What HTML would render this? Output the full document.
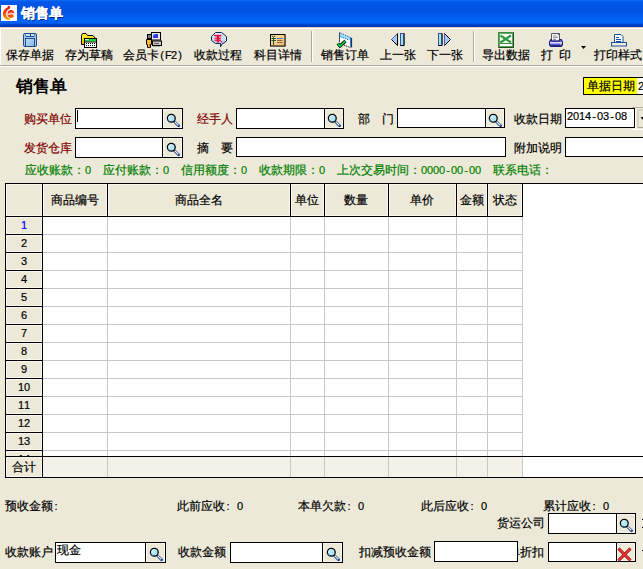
<!DOCTYPE html>
<html><head><meta charset="utf-8">
<style>
*{margin:0;padding:0;box-sizing:border-box}
html,body{width:643px;height:569px;overflow:hidden;background:#ECE9D8;font-family:"Liberation Sans",sans-serif;font-size:12px;color:#000;position:relative}
.a{position:absolute;white-space:nowrap;line-height:12px;-webkit-text-stroke:0.2px currentColor}
.c{display:inline-block;width:6px;text-align:center;font-style:normal;font-size:11px}
.red{color:#800000}
.grn{color:#008000}
</style></head><body>
<div style="position:absolute;left:0;top:0;width:643px;height:27px;background:linear-gradient(#0B6EFC 0px,#0862F0 1px,#0058E8 2px,#0054E3 5px,#0054E3 12px,#0058EA 14px,#005EF2 17px,#0064FA 21px,#0062F8 23px,#0050DC 24px,#003CC0 25px,#003AB8 27px)"></div>
<svg style="position:absolute;left:0;top:0" width="20" height="24" viewBox="0 0 20 24">
<defs><linearGradient id="gflame" x1="0" y1="0" x2="0" y2="1"><stop offset="0" stop-color="#E01010"/><stop offset="0.5" stop-color="#F04A10"/><stop offset="1" stop-color="#F8A800"/></linearGradient>
<linearGradient id="ge" x1="0" y1="0" x2="0" y2="1"><stop offset="0" stop-color="#E81810"/><stop offset="1" stop-color="#F06010"/></linearGradient></defs>
<rect x="1" y="5" width="16" height="16" fill="#fff"/>
<path d="M7.6 5.4 C10 5.6 11 7.4 9.6 8.8 C6.6 10.4 5.6 13 6.4 15.4 C7.2 17.6 9.6 18.6 12.2 19 C9.4 20.6 5 20 3.4 16.4 C2 13 3.6 9.4 7.2 7.6 C8 7 8.2 6.2 7.6 5.4 Z" fill="url(#gflame)"/>
<ellipse cx="10.9" cy="13.9" rx="3.4" ry="3.9" fill="url(#ge)"/>
<path d="M8.6 13.4 C9 11.6 12.4 11.2 13 13 Z" fill="#F8C0A0" opacity="0.5"/>
<path d="M7.6 14.2 L14.4 13.6" stroke="#fff" stroke-width="1.1"/>
<path d="M12 14.6 L14.8 14.2 L14.8 16.4 Z" fill="#fff"/>
</svg>
<div class="a" style="left:21px;top:6px;color:#fff;font-weight:bold;font-size:14px;line-height:14px;-webkit-text-stroke:0.25px #fff;text-shadow:1px 1px 0 #0A2878">销售单</div>
<div style="position:absolute;left:0;top:27px;width:643px;height:1px;background:#D6D0BC"></div>
<div style="position:absolute;left:0;top:28px;width:643px;height:1px;background:#fff"></div>
<div style="position:absolute;left:0;top:28px;width:1px;height:37px;background:#fff"></div>
<div style="position:absolute;left:0;top:65px;width:643px;height:1px;background:#ACA899"></div>
<div style="position:absolute;left:0;top:66px;width:643px;height:1px;background:#fff"></div>
<div style="position:absolute;left:311px;top:31px;width:1px;height:31px;background:#ACA899"></div>
<div style="position:absolute;left:312px;top:31px;width:1px;height:31px;background:#fff"></div>
<div style="position:absolute;left:473px;top:31px;width:1px;height:31px;background:#ACA899"></div>
<div style="position:absolute;left:474px;top:31px;width:1px;height:31px;background:#fff"></div>
<svg style="position:absolute;left:0;top:0" width="643" height="70" viewBox="0 0 643 70">
<defs>
<linearGradient id="gfl" x1="0" y1="0" x2="1" y2="1"><stop offset="0" stop-color="#C9E2FA"/><stop offset="1" stop-color="#7FAEE0"/></linearGradient>
<linearGradient id="gfold" x1="0" y1="0" x2="0" y2="1"><stop offset="0" stop-color="#FFF040"/><stop offset="0.6" stop-color="#FFD800"/><stop offset="1" stop-color="#F09000"/></linearGradient>
<linearGradient id="gcard" x1="0" y1="0" x2="1" y2="1"><stop offset="0" stop-color="#FBE3A8"/><stop offset="1" stop-color="#F0B868"/></linearGradient>
<linearGradient id="gbub" x1="0" y1="0" x2="0" y2="1"><stop offset="0" stop-color="#E4F2FF"/><stop offset="1" stop-color="#A8C8EC"/></linearGradient>
<linearGradient id="gprn" x1="0" y1="0" x2="0" y2="1"><stop offset="0" stop-color="#8080F0"/><stop offset="0.5" stop-color="#C8C8FF"/><stop offset="1" stop-color="#2828A0"/></linearGradient>
</defs>
<!-- 1 floppy -->
<g transform="translate(23,33)">
 <rect x="0.5" y="0.5" width="13" height="13" rx="1.5" fill="#A6CBF0" stroke="#1E4C8A"/>
 <rect x="2.5" y="0.5" width="9" height="3.5" fill="#1E4C8A"/>
 <rect x="3" y="1" width="4" height="2" fill="#C8E0F8"/>
 <rect x="8" y="1" width="3" height="2" fill="#C8E0F8"/>
 <rect x="2.5" y="5.5" width="9" height="8" fill="url(#gfl)" stroke="#1E4C8A"/>
</g>
<!-- 2 folder calc -->
<g transform="translate(81,33)">
 <path d="M0.5 2.5 L1.5 0.5 L5 0.5 L6.5 2.5 L12 2.5 L14.5 5.5 L14.5 11.5 L0.5 11.5 Z" fill="url(#gfold)" stroke="#000"/>
 <rect x="3.5" y="5.5" width="12" height="9" fill="#fff" stroke="#000"/>
 <rect x="4" y="6" width="11" height="2.5" fill="#20D040"/>
 <rect x="4" y="6" width="4" height="1" fill="#C0FFC0"/>
 <rect x="4" y="8.5" width="11" height="1" fill="#000"/>
 <g fill="#000">
 <rect x="5" y="10" width="1" height="1"/><rect x="7" y="10" width="1" height="1"/><rect x="9" y="10" width="1" height="1"/><rect x="11" y="10" width="1" height="1"/><rect x="13" y="10" width="1" height="1"/>
 <rect x="5" y="12" width="1" height="1"/><rect x="7" y="12" width="1" height="1"/><rect x="9" y="12" width="1" height="1"/><rect x="11" y="12" width="1" height="1"/><rect x="13" y="12" width="1" height="1"/>
 </g>
</g>
<!-- 3 member card -->
<g transform="translate(146,32)">
 <rect x="5.5" y="0.5" width="9" height="7.5" fill="#E8E8E8" stroke="#000"/>
 <rect x="7" y="2" width="5" height="4" fill="#3434E8"/>
 <rect x="7" y="2" width="1.5" height="1.5" fill="#40E0F0"/>
 <rect x="6.5" y="9" width="9" height="4.5" fill="#C8C8C8" stroke="#000"/>
 <rect x="8" y="11" width="5" height="1" fill="#606060"/>
 <rect x="7" y="14" width="7" height="1" fill="#B0B0B0"/>
 <rect x="1.5" y="2.5" width="4" height="4" fill="#808080" stroke="#000"/>
 <path d="M0.5 7.5 L5.5 7.5 L5.5 12.5 L4.5 12.5 L4.5 15.5 L1.5 15.5 L1.5 12.5 L0.5 12.5 Z" fill="#F8B838" stroke="#000"/>
 <rect x="3" y="12" width="0.8" height="3.5" fill="#C07800"/>
</g>
<!-- 4 bubble yen -->
<g transform="translate(211,32)">
 <path d="M4.5 0.5 L10.5 0.5 L15.5 4.5 L15.5 9 L12 11.5 L11.5 11.5 L9.5 14.8 L9.5 11.5 L4.5 11.5 L0.5 8.5 L0.5 4.5 Z" fill="url(#gbub)" stroke="#15254F"/>
 <g fill="#E8103C">
 <rect x="3" y="2.8" width="7.5" height="1.5"/>
 <rect x="5.8" y="4" width="2.4" height="6.5"/>
 <rect x="3.5" y="5.6" width="6.5" height="1.2"/>
 <rect x="3.5" y="7.6" width="6.5" height="1.2"/>
 <rect x="9.5" y="9.2" width="1.8" height="1.2"/>
 </g>
</g>
<!-- 5 card -->
<g transform="translate(270,34)">
 <rect x="1" y="1" width="15" height="12" fill="#9A9A9A" opacity="0.5"/>
 <rect x="0.5" y="0.5" width="14.5" height="11.5" fill="url(#gcard)" stroke="#000"/>
 <g stroke="#1F5A2A" stroke-width="1" fill="none">
  <path d="M2 1.5 L3.5 3.5 L5 1.5"/>
  <path d="M1.5 4.5 L6 4.5 M1.5 6.5 L6 6.5 M3.5 3.5 L3.5 11"/>
 </g>
 <rect x="7" y="4" width="5.5" height="1" fill="#4070D0"/>
 <rect x="7" y="6" width="5.5" height="1" fill="#806850"/>
 <rect x="7" y="8" width="5.5" height="1" fill="#806850"/>
</g>
<!-- 6 order -->
<g transform="translate(337,32)">
 <path d="M2.5 0.5 L14.5 6 L14.5 15.5 L2.5 10 Z" fill="#fff"/>
 <path d="M2.5 0.5 L14.5 6 L14.5 8.5 L2.5 4.5 Z" fill="#90E0F8"/>
 <path d="M2.5 0.5 L14.5 6" stroke="#2050A0" stroke-dasharray="1 1"/>
 <path d="M2.5 4.5 L12 8" stroke="#2050A0" stroke-dasharray="1 1"/>
 <path d="M2.5 0.5 L2.5 10" stroke="#404850"/>
 <rect x="13.3" y="6" width="1.8" height="9.5" fill="#0A3A80"/>
 <path d="M7 13 L13 15.5" stroke="#000" stroke-dasharray="1 1"/>
 <path d="M0.8 11.5 L3 14 L8.5 9" stroke="#000" stroke-width="3.2" fill="none"/>
 <path d="M0.8 11.5 L3 14 L8.5 9" stroke="#00E040" stroke-width="1.6" fill="none"/>
</g>
<!-- 7 prev -->
<g transform="translate(391,33)">
 <path d="M0.5 6.5 L6.5 0.5 L6.5 12.5 Z" fill="#A8C8F8"/>
 <path d="M0.5 6.5 L6.5 0.5" stroke="#5858A8"/>
 <path d="M0.5 6.5 L6.5 12.5 M6.5 0.5 L6.5 12.5" stroke="#000"/>
 <rect x="9.5" y="0.5" width="3.5" height="12" fill="#90E8F8" stroke="#484898"/>
 <path d="M13 0.5 L13 12.5 L9.5 12.5" stroke="#000" fill="none"/>
</g>
<!-- 8 next -->
<g transform="translate(438,33)">
 <rect x="0.5" y="0.5" width="3.5" height="12" fill="#90E8F8" stroke="#484898"/>
 <path d="M4 0.5 L4 12.5 L0.5 12.5" stroke="#000" fill="none"/>
 <path d="M6.5 0.5 L12.5 6.5 L6.5 12.5 Z" fill="#A8C8F8"/>
 <path d="M6.5 0.5 L6.5 12.5" stroke="#5858A8"/>
 <path d="M6.5 0.5 L12.5 6.5 L6.5 12.5" stroke="#000" fill="none"/>
</g>
<!-- 9 excel -->
<g transform="translate(498,32)">
 <rect x="0.5" y="0.5" width="15" height="15" fill="#fff" stroke="#3C8C3C"/>
 <rect x="1.5" y="1.5" width="13" height="13" fill="none" stroke="#60A860"/>
 <path d="M15.5 0.5 L15.5 15.5 L0.5 15.5" stroke="#1E4A1E" fill="none"/>
 <path d="M2.5 3.5 L13 10.5 M13 3.5 L2.5 10.5" stroke="#2E9A3E" stroke-width="2.2"/>
 <rect x="2" y="11" width="12" height="1" fill="#3C8C3C"/>
</g>
<!-- 10 printer -->
<g transform="translate(549,33)">
 <path d="M2.5 0.5 L9.5 0.5 L10.5 1.5 L10.5 8 L2.5 8 Z" fill="#F2F2F2" stroke="#5A5A6A"/>
 <rect x="9.2" y="0.2" width="1.6" height="1.6" fill="#303040"/>
 <rect x="4" y="2.5" width="4" height="0.9" fill="#8A8A9A"/><rect x="4" y="4.2" width="5" height="0.9" fill="#8A8A9A"/><rect x="4" y="6" width="3" height="0.9" fill="#8A8A9A"/>
 <path d="M1.5 6.5 L2.5 6.5 L2.5 8 L10.5 8 L10.5 6.5 L12.5 6.5 L13.5 9 L13.5 12 L12.5 13.5 L1.5 13.5 L0.5 12 L0.5 9 Z" fill="#5A5ADC" stroke="#1C1C70"/>
 <rect x="1" y="9" width="12" height="1.6" fill="#D8D8FF"/>
 <rect x="1" y="12" width="12" height="1.5" fill="#26268A"/>
 <rect x="11" y="10.5" width="1.2" height="1.2" fill="#C0FF40"/>
</g>
<path d="M581 46 L586 46 L583.5 49 Z" fill="#000"/>
<!-- 11 print style -->
<g transform="translate(611,34)">
 <path d="M3.5 0.5 L10 0.5 L12 2.5 L12 9 L3.5 9 Z" fill="#fff" stroke="#1A4FA0"/>
 <rect x="5" y="3" width="3" height="1" fill="#1A4FA0"/><rect x="5" y="5" width="5" height="1" fill="#1A4FA0"/><rect x="5" y="7" width="5" height="1" fill="#1A4FA0"/>
 <rect x="0.5" y="8.5" width="15" height="3.5" fill="#F0F0E0" stroke="#1A4FA0"/>
</g>
</svg>

<div class="a " style="left:6px;top:49px;">保存单据</div>
<div class="a " style="left:65px;top:49px;">存为草稿</div>
<div class="a " style="left:123px;top:49px;">会员卡<i class="c">(</i><i class="c">F</i><i class="c">2</i><i class="c">)</i></div>
<div class="a " style="left:194px;top:49px;">收款过程</div>
<div class="a " style="left:254px;top:49px;">科目详情</div>
<div class="a " style="left:321px;top:49px;">销售订单</div>
<div class="a " style="left:380px;top:49px;">上一张</div>
<div class="a " style="left:427px;top:49px;">下一张</div>
<div class="a " style="left:482px;top:49px;">导出数据</div>
<div class="a " style="left:541px;top:49px;">打<span style="display:inline-block;width:6px"></span>印</div>
<div class="a " style="left:594px;top:49px;">打印样式</div>
<div class="a" style="left:16px;top:78px;font-size:16.5px;line-height:17px;font-weight:bold;-webkit-text-stroke:0px #000">销售单</div>
<div style="position:absolute;left:583px;top:77px;width:78px;height:18px;background:#FFFF00;border:1px solid #000;"></div>
<div style="position:absolute;left:637px;top:78px;width:10px;height:16px;background:#fff"></div>
<div class="a " style="left:587px;top:80px;">单据日期</div>
<div class="a " style="left:638px;top:80px;"><i class="c">2</i></div>
<div class="a red" style="left:24px;top:113px;">购买单位</div>
<div style="position:absolute;left:75px;top:108px;width:88px;height:21px;background:#fff;border:1px solid #000;"></div>
<div style="position:absolute;left:162px;top:108px;width:21px;height:21px;background:#ECE9D8;border:1px solid #000;box-shadow:inset 0 0 0 1px #F8F6EC"><div style="position:absolute;left:-1px;top:-1px;width:20px;height:20px"><svg width="20" height="20" viewBox="0 0 20 20" style="position:absolute;left:0;top:0">
<path d="M12.4 13.6 L16.6 17.8" stroke="#183A86" stroke-width="2.7" stroke-linecap="round"/>
<path d="M12.6 13.6 L16.3 17.3" stroke="#E4F2FF" stroke-width="1.3"/>
<circle cx="9.3" cy="10.3" r="3.9" fill="#B0E6F8" stroke="#000" stroke-width="1.3"/>
<path d="M7.2 11.5 A2.6 2.6 0 0 1 9.5 7.6" stroke="#E8FAFF" stroke-width="1" fill="none"/>
<path d="M6 11.5 A3.5 3.5 0 0 0 8 13.6" stroke="#3C78E0" stroke-width="1" fill="none"/>
</svg></div></div>
<div style="position:absolute;left:77px;top:110px;width:1px;height:12px;background:#000"></div>
<div class="a red" style="left:197px;top:113px;">经手人</div>
<div style="position:absolute;left:236px;top:108px;width:89px;height:21px;background:#fff;border:1px solid #000;"></div>
<div style="position:absolute;left:324px;top:108px;width:20px;height:21px;background:#ECE9D8;border:1px solid #000;box-shadow:inset 0 0 0 1px #F8F6EC"><div style="position:absolute;left:-2px;top:-1px;width:20px;height:20px"><svg width="20" height="20" viewBox="0 0 20 20" style="position:absolute;left:0;top:0">
<path d="M12.4 13.6 L16.6 17.8" stroke="#183A86" stroke-width="2.7" stroke-linecap="round"/>
<path d="M12.6 13.6 L16.3 17.3" stroke="#E4F2FF" stroke-width="1.3"/>
<circle cx="9.3" cy="10.3" r="3.9" fill="#B0E6F8" stroke="#000" stroke-width="1.3"/>
<path d="M7.2 11.5 A2.6 2.6 0 0 1 9.5 7.6" stroke="#E8FAFF" stroke-width="1" fill="none"/>
<path d="M6 11.5 A3.5 3.5 0 0 0 8 13.6" stroke="#3C78E0" stroke-width="1" fill="none"/>
</svg></div></div>
<div class="a " style="left:358px;top:113px;">部　门</div>
<div style="position:absolute;left:397px;top:108px;width:89px;height:20px;background:#fff;border:1px solid #000;"></div>
<div style="position:absolute;left:485px;top:108px;width:20px;height:20px;background:#ECE9D8;border:1px solid #000;box-shadow:inset 0 0 0 1px #F8F6EC"><div style="position:absolute;left:-2px;top:-1px;width:20px;height:20px"><svg width="20" height="20" viewBox="0 0 20 20" style="position:absolute;left:0;top:0">
<path d="M12.4 13.6 L16.6 17.8" stroke="#183A86" stroke-width="2.7" stroke-linecap="round"/>
<path d="M12.6 13.6 L16.3 17.3" stroke="#E4F2FF" stroke-width="1.3"/>
<circle cx="9.3" cy="10.3" r="3.9" fill="#B0E6F8" stroke="#000" stroke-width="1.3"/>
<path d="M7.2 11.5 A2.6 2.6 0 0 1 9.5 7.6" stroke="#E8FAFF" stroke-width="1" fill="none"/>
<path d="M6 11.5 A3.5 3.5 0 0 0 8 13.6" stroke="#3C78E0" stroke-width="1" fill="none"/>
</svg></div></div>
<div class="a " style="left:514px;top:113px;">收款日期</div>
<div style="position:absolute;left:565px;top:108px;width:70px;height:20px;background:#fff;border:1px solid #000;"></div>
<div class="a " style="left:567px;top:110px;"><i class="c">2</i><i class="c">0</i><i class="c">1</i><i class="c">4</i><i class="c">-</i><i class="c">0</i><i class="c">3</i><i class="c">-</i><i class="c">0</i><i class="c">8</i></div>
<div style="position:absolute;left:632px;top:107px;width:11px;height:1px;background:#B8B2A0"></div>
<div style="position:absolute;left:635px;top:108px;width:1px;height:22px;background:#fff"></div>
<div style="position:absolute;left:632px;top:129px;width:11px;height:1px;background:#fff"></div>
<div style="position:absolute;left:637px;top:109px;width:10px;height:19px;background:#ECE9D8;border-top:2px solid #D8D4C6;border-left:2px solid #D8D4C6;border-bottom:1px solid #A8A490"></div>
<svg style="position:absolute;left:637px;top:108px" width="6" height="20"><path d="M3.5 9 L8.5 9 L6 12 Z" fill="#000"/></svg>

<div class="a red" style="left:24px;top:142px;">发货仓库</div>
<div style="position:absolute;left:75px;top:137px;width:88px;height:21px;background:#fff;border:1px solid #000;"></div>
<div style="position:absolute;left:162px;top:137px;width:21px;height:21px;background:#ECE9D8;border:1px solid #000;box-shadow:inset 0 0 0 1px #F8F6EC"><div style="position:absolute;left:-1px;top:-1px;width:20px;height:20px"><svg width="20" height="20" viewBox="0 0 20 20" style="position:absolute;left:0;top:0">
<path d="M12.4 13.6 L16.6 17.8" stroke="#183A86" stroke-width="2.7" stroke-linecap="round"/>
<path d="M12.6 13.6 L16.3 17.3" stroke="#E4F2FF" stroke-width="1.3"/>
<circle cx="9.3" cy="10.3" r="3.9" fill="#B0E6F8" stroke="#000" stroke-width="1.3"/>
<path d="M7.2 11.5 A2.6 2.6 0 0 1 9.5 7.6" stroke="#E8FAFF" stroke-width="1" fill="none"/>
<path d="M6 11.5 A3.5 3.5 0 0 0 8 13.6" stroke="#3C78E0" stroke-width="1" fill="none"/>
</svg></div></div>
<div class="a " style="left:197px;top:142px;">摘　要</div>
<div style="position:absolute;left:236px;top:137px;width:270px;height:20px;background:#fff;border:1px solid #000;"></div>
<div class="a " style="left:514px;top:142px;">附加说明</div>
<div style="position:absolute;left:565px;top:137px;width:96px;height:20px;background:#fff;border:1px solid #000;"></div>
<div class="a grn" style="left:25px;top:164px;">应收账款：<i class="c">0</i>　应付账款：<i class="c">0</i>　信用额度：<i class="c">0</i>　收款期限：<i class="c">0</i>　上次交易时间：<i class="c">0</i><i class="c">0</i><i class="c">0</i><i class="c">0</i><i class="c">-</i><i class="c">0</i><i class="c">0</i><i class="c">-</i><i class="c">0</i><i class="c">0</i>　联系电话：</div>
<div style="position:absolute;left:5px;top:183px;width:660px;height:295px;background:#fff;border:1px solid #000"></div>
<div style="position:absolute;left:6px;top:184px;width:516px;height:32px;background:#ECE9D8"></div>
<div style="position:absolute;left:6px;top:217px;width:36px;height:239px;background:#ECE9D8"></div>
<div style="position:absolute;left:43px;top:457px;width:479px;height:20px;background:#F3F1E8"></div>
<div style="position:absolute;left:6px;top:457px;width:36px;height:20px;background:#ECE9D8"></div>
<div style="position:absolute;left:6px;top:184px;width:36px;height:32px;border:1px solid #F8F6EE"></div>
<div style="position:absolute;left:43px;top:184px;width:64px;height:32px;border:1px solid #F8F6EE"></div>
<div style="position:absolute;left:108px;top:184px;width:182px;height:32px;border:1px solid #F8F6EE"></div>
<div style="position:absolute;left:291px;top:184px;width:33px;height:32px;border:1px solid #F8F6EE"></div>
<div style="position:absolute;left:325px;top:184px;width:63px;height:32px;border:1px solid #F8F6EE"></div>
<div style="position:absolute;left:389px;top:184px;width:67px;height:32px;border:1px solid #F8F6EE"></div>
<div style="position:absolute;left:457px;top:184px;width:30px;height:32px;border:1px solid #F8F6EE"></div>
<div style="position:absolute;left:488px;top:184px;width:34px;height:32px;border:1px solid #F8F6EE"></div>
<div style="position:absolute;left:6px;top:217px;width:36px;height:17px;border:1px solid #F8F6EE"></div>
<div style="position:absolute;left:6px;top:235px;width:36px;height:17px;border:1px solid #F8F6EE"></div>
<div style="position:absolute;left:6px;top:253px;width:36px;height:17px;border:1px solid #F8F6EE"></div>
<div style="position:absolute;left:6px;top:271px;width:36px;height:17px;border:1px solid #F8F6EE"></div>
<div style="position:absolute;left:6px;top:289px;width:36px;height:17px;border:1px solid #F8F6EE"></div>
<div style="position:absolute;left:6px;top:307px;width:36px;height:17px;border:1px solid #F8F6EE"></div>
<div style="position:absolute;left:6px;top:325px;width:36px;height:17px;border:1px solid #F8F6EE"></div>
<div style="position:absolute;left:6px;top:343px;width:36px;height:17px;border:1px solid #F8F6EE"></div>
<div style="position:absolute;left:6px;top:361px;width:36px;height:17px;border:1px solid #F8F6EE"></div>
<div style="position:absolute;left:6px;top:379px;width:36px;height:17px;border:1px solid #F8F6EE"></div>
<div style="position:absolute;left:6px;top:397px;width:36px;height:17px;border:1px solid #F8F6EE"></div>
<div style="position:absolute;left:6px;top:415px;width:36px;height:17px;border:1px solid #F8F6EE"></div>
<div style="position:absolute;left:6px;top:433px;width:36px;height:17px;border:1px solid #F8F6EE"></div>
<div style="position:absolute;left:6px;top:451px;width:36px;height:5px;border:1px solid #F8F6EE;border-bottom:none"></div>
<div style="position:absolute;left:6px;top:457px;width:36px;height:20px;border:1px solid #F8F6EE"></div>
<div style="position:absolute;left:42px;top:183px;width:1px;height:34px;background:#000"></div>
<div style="position:absolute;left:107px;top:183px;width:1px;height:34px;background:#000"></div>
<div style="position:absolute;left:290px;top:183px;width:1px;height:34px;background:#000"></div>
<div style="position:absolute;left:324px;top:183px;width:1px;height:34px;background:#000"></div>
<div style="position:absolute;left:388px;top:183px;width:1px;height:34px;background:#000"></div>
<div style="position:absolute;left:456px;top:183px;width:1px;height:34px;background:#000"></div>
<div style="position:absolute;left:487px;top:183px;width:1px;height:34px;background:#000"></div>
<div style="position:absolute;left:522px;top:183px;width:1px;height:34px;background:#000"></div>
<div style="position:absolute;left:5px;top:216px;width:518px;height:1px;background:#000"></div>
<div style="position:absolute;left:107px;top:217px;width:1px;height:260px;background:#C8C8C8"></div>
<div style="position:absolute;left:290px;top:217px;width:1px;height:260px;background:#C8C8C8"></div>
<div style="position:absolute;left:324px;top:217px;width:1px;height:260px;background:#C8C8C8"></div>
<div style="position:absolute;left:388px;top:217px;width:1px;height:260px;background:#C8C8C8"></div>
<div style="position:absolute;left:456px;top:217px;width:1px;height:260px;background:#C8C8C8"></div>
<div style="position:absolute;left:487px;top:217px;width:1px;height:260px;background:#C8C8C8"></div>
<div style="position:absolute;left:522px;top:217px;width:1px;height:260px;background:#C8C8C8"></div>
<div style="position:absolute;left:43px;top:234px;width:480px;height:1px;background:#C8C8C8"></div>
<div style="position:absolute;left:5px;top:234px;width:38px;height:1px;background:#000"></div>
<div style="position:absolute;left:43px;top:252px;width:480px;height:1px;background:#C8C8C8"></div>
<div style="position:absolute;left:5px;top:252px;width:38px;height:1px;background:#000"></div>
<div style="position:absolute;left:43px;top:270px;width:480px;height:1px;background:#C8C8C8"></div>
<div style="position:absolute;left:5px;top:270px;width:38px;height:1px;background:#000"></div>
<div style="position:absolute;left:43px;top:288px;width:480px;height:1px;background:#C8C8C8"></div>
<div style="position:absolute;left:5px;top:288px;width:38px;height:1px;background:#000"></div>
<div style="position:absolute;left:43px;top:306px;width:480px;height:1px;background:#C8C8C8"></div>
<div style="position:absolute;left:5px;top:306px;width:38px;height:1px;background:#000"></div>
<div style="position:absolute;left:43px;top:324px;width:480px;height:1px;background:#C8C8C8"></div>
<div style="position:absolute;left:5px;top:324px;width:38px;height:1px;background:#000"></div>
<div style="position:absolute;left:43px;top:342px;width:480px;height:1px;background:#C8C8C8"></div>
<div style="position:absolute;left:5px;top:342px;width:38px;height:1px;background:#000"></div>
<div style="position:absolute;left:43px;top:360px;width:480px;height:1px;background:#C8C8C8"></div>
<div style="position:absolute;left:5px;top:360px;width:38px;height:1px;background:#000"></div>
<div style="position:absolute;left:43px;top:378px;width:480px;height:1px;background:#C8C8C8"></div>
<div style="position:absolute;left:5px;top:378px;width:38px;height:1px;background:#000"></div>
<div style="position:absolute;left:43px;top:396px;width:480px;height:1px;background:#C8C8C8"></div>
<div style="position:absolute;left:5px;top:396px;width:38px;height:1px;background:#000"></div>
<div style="position:absolute;left:43px;top:414px;width:480px;height:1px;background:#C8C8C8"></div>
<div style="position:absolute;left:5px;top:414px;width:38px;height:1px;background:#000"></div>
<div style="position:absolute;left:43px;top:432px;width:480px;height:1px;background:#C8C8C8"></div>
<div style="position:absolute;left:5px;top:432px;width:38px;height:1px;background:#000"></div>
<div style="position:absolute;left:43px;top:450px;width:480px;height:1px;background:#C8C8C8"></div>
<div style="position:absolute;left:5px;top:450px;width:38px;height:1px;background:#000"></div>
<div style="position:absolute;left:42px;top:216px;width:1px;height:262px;background:#000"></div>
<div style="position:absolute;left:5px;top:456px;width:660px;height:1px;background:#000"></div>
<div class="a" style="left:6px;top:219px;width:36px;text-align:center;color:#0000FF"><i class="c">1</i></div>
<div class="a" style="left:6px;top:237px;width:36px;text-align:center;color:#000"><i class="c">2</i></div>
<div class="a" style="left:6px;top:255px;width:36px;text-align:center;color:#000"><i class="c">3</i></div>
<div class="a" style="left:6px;top:273px;width:36px;text-align:center;color:#000"><i class="c">4</i></div>
<div class="a" style="left:6px;top:291px;width:36px;text-align:center;color:#000"><i class="c">5</i></div>
<div class="a" style="left:6px;top:309px;width:36px;text-align:center;color:#000"><i class="c">6</i></div>
<div class="a" style="left:6px;top:327px;width:36px;text-align:center;color:#000"><i class="c">7</i></div>
<div class="a" style="left:6px;top:345px;width:36px;text-align:center;color:#000"><i class="c">8</i></div>
<div class="a" style="left:6px;top:363px;width:36px;text-align:center;color:#000"><i class="c">9</i></div>
<div class="a" style="left:6px;top:381px;width:36px;text-align:center;color:#000"><i class="c">1</i><i class="c">0</i></div>
<div class="a" style="left:6px;top:399px;width:36px;text-align:center;color:#000"><i class="c">1</i><i class="c">1</i></div>
<div class="a" style="left:6px;top:417px;width:36px;text-align:center;color:#000"><i class="c">1</i><i class="c">2</i></div>
<div class="a" style="left:6px;top:435px;width:36px;text-align:center;color:#000"><i class="c">1</i><i class="c">3</i></div>
<div class="a" style="left:42px;top:194px;width:65px;text-align:center">商品编号</div>
<div class="a" style="left:107px;top:194px;width:183px;text-align:center">商品全名</div>
<div class="a" style="left:290px;top:194px;width:34px;text-align:center">单位</div>
<div class="a" style="left:324px;top:194px;width:64px;text-align:center">数量</div>
<div class="a" style="left:388px;top:194px;width:68px;text-align:center">单价</div>
<div class="a" style="left:456px;top:194px;width:31px;text-align:center">金额</div>
<div class="a" style="left:487px;top:194px;width:35px;text-align:center">状态</div>
<div class="a" style="left:6px;top:461px;width:36px;text-align:center">合计</div>
<div style="position:absolute;left:6px;top:451px;width:36px;height:5px;overflow:hidden"><div class="a" style="left:0;top:2px;width:36px;text-align:center"><i class="c">1</i><i class="c">4</i></div></div>
<div class="a " style="left:5px;top:500px;">预收金额<i class="c">:</i></div>
<div class="a " style="left:177px;top:500px;">此前应收<i class="c">:</i><i class="c">&nbsp;</i><i class="c">0</i></div>
<div class="a " style="left:298px;top:500px;">本单欠款<i class="c">:</i><i class="c">&nbsp;</i><i class="c">0</i></div>
<div class="a " style="left:421px;top:500px;">此后应收<i class="c">:</i><i class="c">&nbsp;</i><i class="c">0</i></div>
<div class="a " style="left:543px;top:500px;">累计应收<i class="c">:</i><i class="c">&nbsp;</i><i class="c">0</i></div>
<div class="a " style="left:497px;top:517px;">货运公司</div>
<div style="position:absolute;left:548px;top:513px;width:69px;height:21px;background:#fff;border:1px solid #000;"></div>
<div style="position:absolute;left:616px;top:513px;width:20px;height:21px;background:#ECE9D8;border:1px solid #000;box-shadow:inset 0 0 0 1px #F8F6EC"><div style="position:absolute;left:-2px;top:-1px;width:20px;height:20px"><svg width="20" height="20" viewBox="0 0 20 20" style="position:absolute;left:0;top:0">
<path d="M12.4 13.6 L16.6 17.8" stroke="#183A86" stroke-width="2.7" stroke-linecap="round"/>
<path d="M12.6 13.6 L16.3 17.3" stroke="#E4F2FF" stroke-width="1.3"/>
<circle cx="9.3" cy="10.3" r="3.9" fill="#B0E6F8" stroke="#000" stroke-width="1.3"/>
<path d="M7.2 11.5 A2.6 2.6 0 0 1 9.5 7.6" stroke="#E8FAFF" stroke-width="1" fill="none"/>
<path d="M6 11.5 A3.5 3.5 0 0 0 8 13.6" stroke="#3C78E0" stroke-width="1" fill="none"/>
</svg></div></div>
<div class="a " style="left:5px;top:546px;">收款账户</div>
<div style="position:absolute;left:55px;top:542px;width:91px;height:21px;background:#fff;border:1px solid #000;"></div>
<div style="position:absolute;left:145px;top:542px;width:21px;height:21px;background:#ECE9D8;border:1px solid #000;box-shadow:inset 0 0 0 1px #F8F6EC"><div style="position:absolute;left:-1px;top:-1px;width:20px;height:20px"><svg width="20" height="20" viewBox="0 0 20 20" style="position:absolute;left:0;top:0">
<path d="M12.4 13.6 L16.6 17.8" stroke="#183A86" stroke-width="2.7" stroke-linecap="round"/>
<path d="M12.6 13.6 L16.3 17.3" stroke="#E4F2FF" stroke-width="1.3"/>
<circle cx="9.3" cy="10.3" r="3.9" fill="#B0E6F8" stroke="#000" stroke-width="1.3"/>
<path d="M7.2 11.5 A2.6 2.6 0 0 1 9.5 7.6" stroke="#E8FAFF" stroke-width="1" fill="none"/>
<path d="M6 11.5 A3.5 3.5 0 0 0 8 13.6" stroke="#3C78E0" stroke-width="1" fill="none"/>
</svg></div></div>
<div class="a " style="left:57px;top:544px;">现金</div>
<div class="a " style="left:178px;top:546px;">收款金额</div>
<div style="position:absolute;left:230px;top:542px;width:93px;height:21px;background:#fff;border:1px solid #000;"></div>
<div style="position:absolute;left:322px;top:542px;width:21px;height:21px;background:#ECE9D8;border:1px solid #000;box-shadow:inset 0 0 0 1px #F8F6EC"><div style="position:absolute;left:-1px;top:-1px;width:20px;height:20px"><svg width="20" height="20" viewBox="0 0 20 20" style="position:absolute;left:0;top:0">
<path d="M12.4 13.6 L16.6 17.8" stroke="#183A86" stroke-width="2.7" stroke-linecap="round"/>
<path d="M12.6 13.6 L16.3 17.3" stroke="#E4F2FF" stroke-width="1.3"/>
<circle cx="9.3" cy="10.3" r="3.9" fill="#B0E6F8" stroke="#000" stroke-width="1.3"/>
<path d="M7.2 11.5 A2.6 2.6 0 0 1 9.5 7.6" stroke="#E8FAFF" stroke-width="1" fill="none"/>
<path d="M6 11.5 A3.5 3.5 0 0 0 8 13.6" stroke="#3C78E0" stroke-width="1" fill="none"/>
</svg></div></div>
<div class="a " style="left:359px;top:546px;">扣减预收金额</div>
<div class="a " style="left:508px;top:546px;">单折扣</div>
<div style="position:absolute;left:434px;top:541px;width:84px;height:21px;background:#fff;border:1px solid #000;"></div>
<div style="position:absolute;left:548px;top:542px;width:69px;height:20px;background:#fff;border:1px solid #000;"></div>
<div style="position:absolute;left:616px;top:542px;width:20px;height:20px;background:#ECE9D8;border:1px solid #000;box-shadow:inset 0 0 0 1px #F8F6EC"><div style="position:absolute;left:-2px;top:-1px;width:20px;height:20px"><svg width="20" height="20" viewBox="0 0 20 20" style="position:absolute;left:0;top:0">
<path d="M3.5 6.5 L15.5 18.5 M15.5 6.5 L3.5 18.5" stroke="#700000" stroke-width="3"/>
<path d="M3.5 6.5 L15.5 18.5 M15.5 6.5 L3.5 18.5" stroke="#F03030" stroke-width="1.8"/>
</svg></div></div>
<div style="position:absolute;left:642px;top:519px;width:1px;height:1px;background:#000"></div>
<div style="position:absolute;left:642px;top:527px;width:1px;height:1px;background:#000"></div>
<div style="position:absolute;left:642px;top:550px;width:1px;height:1px;background:#000"></div>
</body></html>
